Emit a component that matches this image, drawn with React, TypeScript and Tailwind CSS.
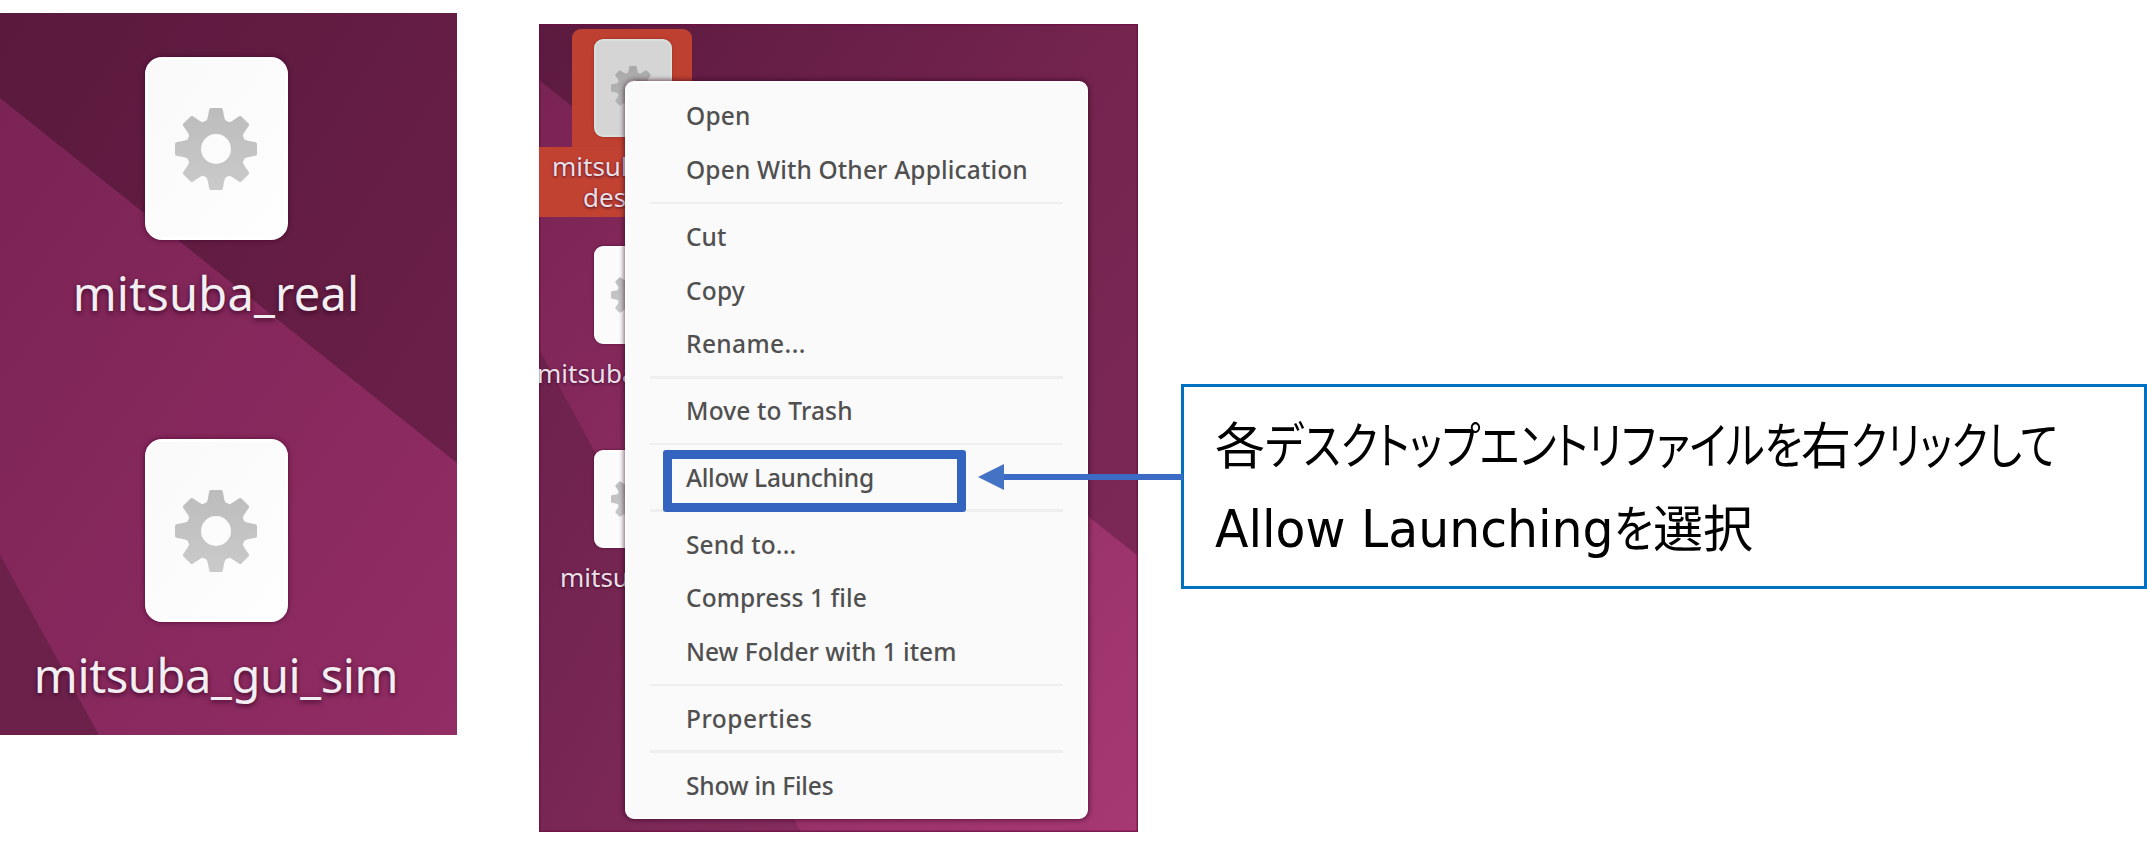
import React from "react";

const UI = "font-['Noto_Sans',sans-serif]";
const JP = "font-['Noto_Sans_CJK_JP',sans-serif]";

function Gear({ className }: { className: string }) {
  return (
    <svg viewBox="-41 -41 82 82" className={className} aria-hidden="true">
      <defs>
        <linearGradient id="gear" gradientUnits="userSpaceOnUse" x1="0" y1="-41" x2="0" y2="41">
          <stop offset="0" stopColor="#bcbcbc" />
          <stop offset="1" stopColor="#cacaca" />
        </linearGradient>
        <mask id="hole" maskUnits="userSpaceOnUse" x="-41" y="-41" width="82" height="82">
          <rect x="-41" y="-41" width="82" height="82" fill="#fff" />
          <circle r="15" fill="#000" />
        </mask>
      </defs>
      <g mask="url(#hole)">
        <rect x="-41" y="-41" width="82" height="82" fill="url(#gear)" clipPath="url(#teeth)" />
      </g>
      <clipPath id="teeth">
        <circle r="30" />
        {[0, 45, 90, 135, 180, 225, 270, 315].map((a) => (
          <path key={a} transform={`rotate(${a})`} d="M-13-24Q-9-28-8.200-32L-6.800-39.500Q-6.400-41-5-41H5Q6.400-41 6.800-39.500L8.200-32Q9-28 13-24Z" />
        ))}
      </clipPath>
    </svg>
  );
}

function BigIcon({ label, spacing }: { label: string; spacing: string }) {
  return (
    <div className="flex w-[432px] flex-col items-center">
      <div className="flex h-[183px] w-[143px] items-center justify-center rounded-[17px] border-[3px] border-white bg-linear-to-br from-[#f9f9f9] to-[#fefefe] shadow-[0_0_5px_rgba(60,0,35,0.75)]">
        <Gear className="size-[82px]" />
      </div>
      <span className={`mt-[20px] text-[47px] leading-[66px] whitespace-nowrap text-[#f3eef1] [text-shadow:0_2px_5px_rgba(50,0,30,0.8)] ${UI} ${spacing}`}>{label}</span>
    </div>
  );
}

function SmallPaper({ selected }: { selected?: boolean }) {
  return (
    <div className={`flex h-[98px] w-[78px] shrink-0 items-center justify-center rounded-[9px] border-2 ${selected ? "border-[#d5e0df] bg-[#d5d5d5] shadow-[0_0_3px_#a02a20]" : "border-white bg-[#fbfbfb] shadow-[0_0_3px_rgba(60,0,35,0.6)]"}`}>
      <Gear className={selected ? "size-[44px] brightness-90" : "size-[44px]"} />
    </div>
  );
}

const label = "text-[26px] leading-[31px] whitespace-nowrap text-[#eadfe6] [text-shadow:0_1px_3px_rgba(50,0,30,0.8)]";

const groups: { text: string; cls: string }[][] = [
  [
    { text: "Open", cls: "tracking-[0.2px]" },
    { text: "Open With Other Application", cls: "tracking-[0.15px]" },
  ],
  [
    { text: "Cut", cls: "tracking-[0px]" },
    { text: "Copy", cls: "tracking-[0.2px]" },
    { text: "Rename...", cls: "tracking-[0.4px]" },
  ],
  [{ text: "Move to Trash", cls: "tracking-[0.15px]" }],
  [{ text: "Allow Launching", cls: "tracking-[-0.3px]" }],
  [
    { text: "Send to...", cls: "tracking-[0.15px]" },
    { text: "Compress 1 file", cls: "tracking-[0.1px]" },
    { text: "New Folder with 1 item", cls: "tracking-[0px]" },
  ],
  [{ text: "Properties", cls: "tracking-[0.5px]" }],
  [{ text: "Show in Files", cls: "tracking-[-0.2px]" }],
];

function ContextMenu() {
  return (
    <div className="absolute top-[57px] left-[86px] flex h-[738px] w-[463px] flex-col rounded-[9px] border-2 border-white bg-[#fafafa] px-[23px] pt-[6px] shadow-[0_0_5px_1px_rgba(50,0,30,0.65)]">
      {groups.map((g, i) => (
        <React.Fragment key={i}>
          {i > 0 && <div className="my-[5px] h-[2.900px] shrink-0 bg-[#efefef]" />}
          {g.map((it) => (
            <div key={it.text} className="flex h-[53.800px] shrink-0 items-center pt-px pl-[36px]">
              <span className={`text-[24.500px] leading-[34px] font-medium whitespace-nowrap text-[#505050] ${it.cls}`}>{it.text}</span>
            </div>
          ))}
        </React.Fragment>
      ))}
    </div>
  );
}

export default function App() {
  return (
    <div className="relative flex h-[852px] w-[2147px] items-start overflow-hidden bg-white">
      <section className="relative mt-[13px] h-[722px] w-[457px] shrink-0 overflow-hidden">
        <svg className="absolute inset-0" width="457" height="722" aria-hidden="true">
          <defs>
            <linearGradient id="a" x1="0" y1="0" x2="1" y2="1">
              <stop offset="0" stopColor="#5a193d" />
              <stop offset="1" stopColor="#6f214b" />
            </linearGradient>
            <linearGradient id="b" x1="0" y1="0" x2="1" y2="1">
              <stop offset="0" stopColor="#7a2354" />
              <stop offset="1" stopColor="#922d65" />
            </linearGradient>
          </defs>
          <rect width="457" height="722" fill="url(#a)" />
          <path d="M0 85L457 450V722H0Z" fill="url(#b)" />
          <path d="M0 542L99 722H0Z" fill="#6c214b" />
        </svg>
        <div className="relative flex flex-col gap-[113px] pt-[44px]">
          <BigIcon label="mitsuba_real" spacing="tracking-[0.200px]" />
          <BigIcon label="mitsuba_gui_sim" spacing="tracking-[-0.400px]" />
        </div>
      </section>

      <section className={`relative mt-[24px] ml-[82px] h-[808px] w-[599px] shrink-0 overflow-hidden ${UI}`}>
        <svg className="absolute inset-0" width="599" height="808" aria-hidden="true">
          <defs>
            <linearGradient id="c" x1="0" y1="0" x2="1" y2="1">
              <stop offset="0" stopColor="#5c1a3f" />
              <stop offset="0.500" stopColor="#74244f" />
              <stop offset="1" stopColor="#802a5a" />
            </linearGradient>
            <linearGradient id="d" x1="0" y1="0" x2="1" y2="1">
              <stop offset="0" stopColor="#792354" />
              <stop offset="1" stopColor="#a63873" />
            </linearGradient>
            <linearGradient id="e" x1="0" y1="0" x2="1" y2="1">
              <stop offset="0" stopColor="#6c214b" />
              <stop offset="1" stopColor="#842c5d" />
            </linearGradient>
          </defs>
          <rect width="599" height="808" fill="url(#c)" />
          <path d="M0 56L599 532V808H0Z" fill="url(#d)" />
          <path d="M0 325L262 808H0Z" fill="url(#e)" />
          <rect x="0.500" y="0.500" width="598" height="807" fill="none" stroke="#6b0f42" strokeOpacity="0.700" strokeWidth="2" />
        </svg>
        <div className="relative flex w-[190px] flex-col pt-[5px]">
          <div className="ml-[33px] h-[118px] w-[120px] rounded-t-[9px] bg-[#be4030] pt-[10px] pl-[22px]">
            <SmallPaper selected />
          </div>
          <div className={`flex h-[70px] flex-col bg-[#c24232] pt-[4px] ${label}`}>
            <span className="pl-[13px]">mitsub</span>
            <span className="pl-[44px]">des</span>
          </div>
          <div className="flex flex-col pt-[29px] pl-[55px]">
            <SmallPaper />
          </div>
          <span className={`mt-[14px] ml-[-2px] ${label}`}>mitsuba</span>
          <div className="flex flex-col pt-[61px] pl-[55px]">
            <SmallPaper />
          </div>
          <span className={`mt-[14px] pl-[21px] ${label}`}>mitsu</span>
        </div>
        <ContextMenu />
      </section>

      <div className="absolute top-[450px] left-[663px] h-[62px] w-[303px] rounded-[3px] border-[9.500px] border-[#3264c0]" />
      <svg className="absolute top-[463px] left-[977px]" width="206" height="28" aria-hidden="true">
        <path d="M20 14H206" stroke="#3b6bc4" strokeWidth="6" />
        <path d="M1 14L27 1V27Z" fill="#4472c4" />
      </svg>

      <section className="mt-[384px] ml-[43px] h-[205px] w-[966px] shrink-0 border-[3px] border-[#0070c0] bg-white pt-[14px] pl-[31px] text-black">
        <p className={`flex text-[50px] leading-[83px] whitespace-nowrap [font-feature-settings:'palt'] ${JP}`}>
          <span>各</span>
          <span className="w-[536px] origin-left scale-x-[0.825]">デスクトップエントリファイルを</span>
          <span>右</span>
          <span className="w-[205px] origin-left scale-x-[0.805]">クリックして</span>
        </p>
        <p className="flex items-baseline text-[50px] leading-[83px] whitespace-nowrap">
          <span className="w-[399px] origin-left scale-x-[0.940] font-['DejaVu_Sans',sans-serif] text-[52px]">Allow Launching</span>
          <span className={`w-[39px] origin-left scale-x-[0.850] [font-feature-settings:'palt'] ${JP}`}>を</span>
          <span className={JP}>選択</span>
        </p>
      </section>
    </div>
  );
}
